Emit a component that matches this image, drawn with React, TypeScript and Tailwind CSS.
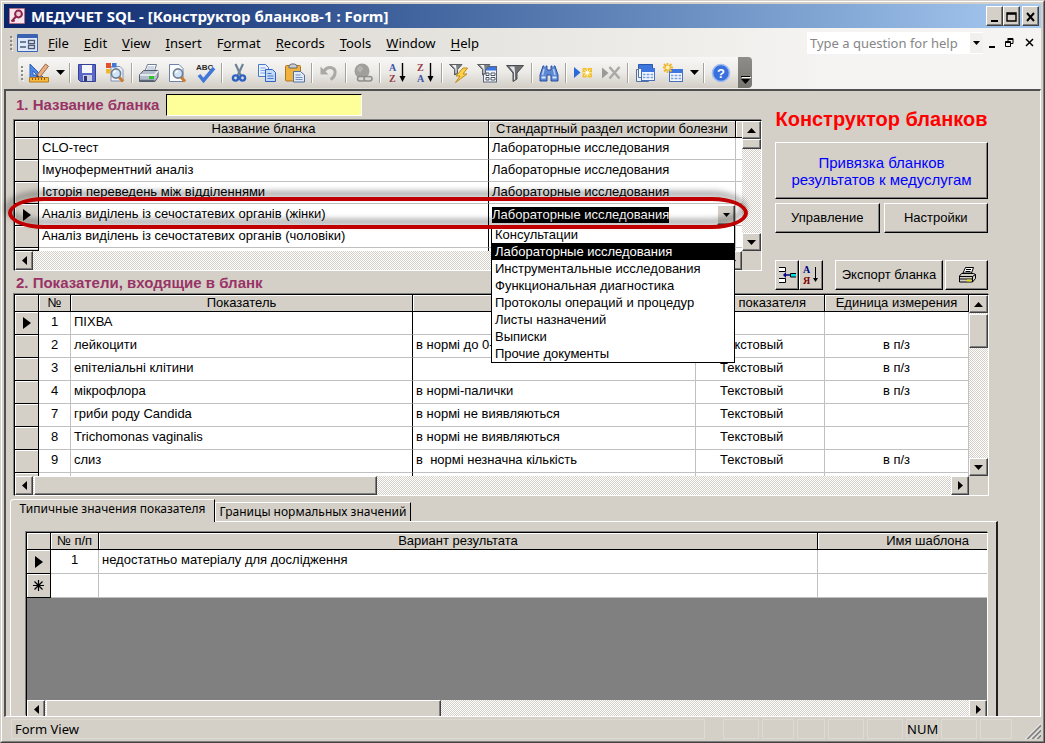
import { ReactNode, useState } from "react";
import { twMerge } from "tailwind-merge";

const raised =
  "bg-[#d4d0c8] border border-t-white border-l-white border-r-[#404040] border-b-[#404040] shadow-[inset_-1px_-1px_#808080]";
const dither =
  "bg-[repeating-conic-gradient(#ffffff_0_25%,#d4d0c8_0_50%)] bg-[length:2px_2px]";

const menus: [string, string, string][] = [
  ["", "F", "ile"],
  ["", "E", "dit"],
  ["", "V", "iew"],
  ["", "I", "nsert"],
  ["F", "o", "rmat"],
  ["", "R", "ecords"],
  ["", "T", "ools"],
  ["", "W", "indow"],
  ["", "H", "elp"],
];

const sections = [
  "Консультации",
  "Лабораторные исследования",
  "Инструментальные исследования",
  "Функциональная диагностика",
  "Протоколы операций и процедур",
  "Листы назначений",
  "Выписки",
  "Прочие документы",
];

const blanks = [
  { name: "CLO-тест", section: sections[1] },
  { name: "Імуноферментний аналіз", section: sections[1] },
  { name: "Історія переведень між відділеннями", section: sections[1] },
  { name: "Аналіз виділень із сечостатевих органів (жінки)", section: sections[1] },
  { name: "Аналіз виділень із сечостатевих органів (чоловіки)", section: "" },
];

const indicators = [
  { no: 1, name: "ПІХВА", norm: "", type: "", unit: "" },
  { no: 2, name: "лейкоцити", norm: "в нормі до 0-", type: "Текстовый", unit: "в п/з" },
  { no: 3, name: "епітеліальні клітини", norm: "", type: "Текстовый", unit: "в п/з" },
  { no: 4, name: "мікрофлора", norm: "в нормі-палички", type: "Текстовый", unit: "в п/з" },
  { no: 7, name: "гриби роду Candida", norm: "в нормі не виявляються", type: "Текстовый", unit: "" },
  { no: 8, name: "Trichomonas vaginalis", norm: "в нормі не виявляються", type: "Текстовый", unit: "" },
  { no: 9, name: "слиз", norm: "в\u00a0 нормі незначна кількість", type: "Текстовый", unit: "в п/з" },
];

export default function App() {
  return (
    <div className="min-h-screen flex flex-col border border-t-[#d4d0c8] border-l-[#d4d0c8] border-r-[#404040] border-b-[#404040] bg-[#d4d0c8] font-['Liberation_Sans',sans-serif] text-[13px] leading-4 text-black">
      <div className="flex-1 flex flex-col border border-t-white border-l-white border-r-[#808080] border-b-[#808080] p-[2px]">
        <TitleBar />
        <div className="bg-linear-to-r from-[#d4d0c8] to-[#f5f4f2] to-80%">
          <MenuBar />
          <Toolbar />
        </div>
        <main className="flex-1 flex flex-col border-t-2 border-l-2 border-r border-b border-t-[#505050] border-l-[#505050] border-r-white border-b-white pl-1">
          <div className="flex gap-[13px] pl-1 pr-[52px]">
            <BlankList />
            <Actions />
          </div>
          <IndicatorTable />
          <ValueTabs />
        </main>
        <StatusBar />
      </div>
    </div>
  );
}

const TitleBar = () => (
  <header className="flex h-6 items-center gap-1.5 bg-linear-to-r from-[#0a246a] to-[#a6caf0] pl-[5px] pr-[2px]">
    <svg className="size-4 shrink-0" viewBox="0 0 16 16">
      <rect width="16" height="16" rx="1" fill="#b8708a" />
      <rect x="1" y="1" width="14" height="14" fill="#f6e6ec" />
      <circle cx="9.5" cy="6" r="3.4" fill="#f3c9d6" stroke="#8d2348" strokeWidth="2" />
      <path d="M7 8.5 2.5 13.5M4 12l1.5 1.5" stroke="#8d2348" strokeWidth="2" />
    </svg>
    <h1 className="flex-1 font-['Noto_Sans',sans-serif] text-[15px] font-bold text-white whitespace-nowrap">
      МЕДУЧЕТ SQL - [Конструктор бланков-1 : Form]
    </h1>
    <div className="flex">
      <WindowButton label="Minimize">
        <path d="M4 12h7" strokeWidth="2" />
      </WindowButton>
      <WindowButton label="Maximize">
        <path d="M3 4h9v8H3zM3 5h9" />
      </WindowButton>
      <WindowButton label="Close" className="ml-[2px]">
        <path d="m4 4 7 8M11 4l-7 8" strokeWidth="2" />
      </WindowButton>
    </div>
  </header>
);

const WindowButton = ({
  label,
  className,
  children,
}: {
  label: string;
  className?: string;
  children: ReactNode;
}) => (
  <button
    aria-label={label}
    className={twMerge("h-5 w-[17px] flex items-center justify-center", raised, className)}
  >
    <svg className="size-[15px] shrink-0" viewBox="0 0 15 15" fill="none" stroke="black" strokeWidth="1.4">
      {children}
    </svg>
  </button>
);

const Grip = () => (
  <svg className="h-4 w-1 shrink-0" viewBox="0 0 4 16" fill="#8c8a85">
    <path d="M0 1h2v2H0zM0 5h2v2H0zM0 9h2v2H0zM0 13h2v2H0z" />
    <path d="M2 3h1v1H2zM2 7h1v1H2zM2 11h1v1H2zM2 15h1v1H2z" fill="white" />
  </svg>
);

const MenuBar = () => (
  <nav className="flex h-[29px] items-center pl-[6px] pr-1 font-['Noto_Sans',sans-serif] text-[13px]">
    <Grip />
    <svg className="ml-[3px] mr-[10px] h-[18px] w-[21px] shrink-0" viewBox="0 0 21 18">
      <rect width="21" height="18" rx="1" fill="#3c63b0" />
      <rect x="1" y="4" width="19" height="13" fill="#dfe9fa" />
      <path d="M3 8h6M3 13h6" stroke="#4b5b78" strokeWidth="1.5" />
      <path d="M11.5 6.5h6v3h-6zM11.5 11.500h6v3h-6z" fill="white" stroke="#4b5b78" strokeWidth="1.3" />
    </svg>
    <div className="flex gap-[15px]">
      {menus.map(([before, key, after]) => (
        <button key={before + key + after} className="whitespace-nowrap">
          {before}
          <u className="underline-offset-2">{key}</u>
          {after}
        </button>
      ))}
    </div>
    <div className="ml-auto flex h-[22px] items-center bg-white">
      <input
        aria-label="Type a question for help"
        placeholder="Type a question for help"
        className="w-[163px] px-[3px] placeholder:text-[#868686] outline-none"
      />
      <button aria-label="Show questions" className="flex h-5 w-[13px] items-center justify-center bg-[#f1f0ee]">
        <Arrow dir="down" className="w-[7px] h-1" />
      </button>
    </div>
    <svg className="ml-1 h-3 w-[50px] shrink-0" viewBox="0 0 50 12" fill="none" stroke="black">
      <path d="M2 10h6" strokeWidth="2" />
      <path d="M21 1.500h5v5h-2M21 2.500h5M21 1v3M18.500 4.500h5v5h-5zM18.500 5.500h5" />
      <path d="m39 2 7 7M46 2l-7 7" strokeWidth="1.500" />
    </svg>
  </nav>
);

const Arrow = ({
  dir,
  className,
}: {
  dir: "up" | "down" | "left" | "right";
  className?: string;
}) => {
  const paths = {
    up: "M5 0l5 10H0z",
    down: "M0 0h10L5 10z",
    left: "M10 0v10L0 5z",
    right: "M0 0l10 5L0 10z",
  };
  return (
    <svg className={className} viewBox="0 0 10 10" preserveAspectRatio="none">
      <path d={paths[dir]} />
    </svg>
  );
};

const Tool = ({
  label,
  children,
}: {
  label: string;
  children: ReactNode;
}) => (
  <button aria-label={label} className="flex h-7 w-7 items-center justify-center">
    <svg className="size-5 overflow-visible" viewBox="0 0 20 20" fill="none">
      {children}
    </svg>
  </button>
);

const Separator = () => (
  <div className="flex h-5 w-[6px] justify-center">
    <div className="h-full w-px bg-[#a5a39d]" />
    <div className="h-full w-px bg-white" />
  </div>
);

const DropArrow = () => (
  <button aria-label="More" className="flex h-7 w-3.5 items-center justify-center">
    <Arrow dir="down" className="h-[5px] w-[9px]" />
  </button>
);

const Lens = () => (
  <>
    <path d="m14 14 4 4.500" stroke="#d07a2a" strokeWidth="3" />
    <circle cx="11" cy="10.500" r="4.600" fill="#cfe4f8" stroke="#6f7f90" strokeWidth="1.600" />
    <path d="M8.500 10a3 3 0 0 1 2.500-2" stroke="white" strokeWidth="1.400" />
  </>
);

const Sheet = () => (
  <path d="M2.500 1.500h9.500l4 4v13H2.500z" fill="#fbfcfe" stroke="#6c84ac" />
);

const Grid = ({ x, y }: { x: number; y: number }) => (
  <g transform={`translate(${x} ${y})`}>
    <rect x="0.500" y="0.500" width="13" height="12" fill="#eef4fd" stroke="#4a6fb8" />
    <path d="M0 0h14v4H0z" fill="#3d76de" />
    <path d="M2 6.500h10M2 9.500h10" stroke="#7fa2de" strokeWidth="1.500" />
    <path d="M5 4v8M9 4v8" stroke="white" />
  </g>
);

const SmallFunnel = () => (
  <>
    <path d="M0.500 1.500h12.500l-4.500 5v4l-3 1.500v-5.500z" fill="#808386" stroke="#5d6063" />
    <path d="M3 2h4l.5 4v4h-1v-4z" fill="#f0f1f2" />
  </>
);

const SortIcon = ({ first, second }: { first: string; second: string }) => (
  <g fontFamily="Liberation Serif" fontWeight="bold" fontSize="10">
    <text x="2" y="8" fill={first === "A" ? "#3a56a8" : "#963c44"}>{first}</text>
    <text x="2" y="19" fill={second === "A" ? "#3a56a8" : "#963c44"}>{second}</text>
    <path d="M15.500 0v15" stroke="black" strokeWidth="1.400" />
    <path d="M12.500 13h6l-3 6z" fill="black" />
  </g>
);

const Toolbar = () => (
  <div className="flex h-8 items-stretch pl-[14px] pb-px">
    <div className="flex items-center rounded-l bg-linear-to-b from-[#f8f7f6] via-[#eceae6] to-[#d2cec6] pl-[3px] pr-[3px]">
      <Grip />
      <Tool label="Design view">
        <path d="M1 1v14h14z" fill="#4f86e4" stroke="#2f62c0" />
        <path d="M4 8v4h4z" fill="#f2f4f8" stroke="#2f62c0" />
        <path d="m8 12 8.500-11 3 2.300-8.700 11z" fill="#e8b184" stroke="#9b6a48" />
        <path d="m7 15.500 1-3.500 2.800 2.300z" fill="#4b3b30" />
        <path d="M.500 14.500h19v4.500H.500z" fill="#f5b83a" stroke="#b97a1d" />
        <path d="M3.500 15v2M6.500 15v2M9.500 15v2M12.500 15v2M15.500 15v2" stroke="#8a5a12" />
      </Tool>
      <DropArrow />
      <Separator />
      <Tool label="Save">
        <path d="M1.500 1.500h17v17h-15l-2-2z" fill="#5b67c6" stroke="#343f96" />
        <path d="M5 2h10v8H5z" fill="#f4f6fb" />
        <path d="M6 12h9v6H6z" fill="#c9cfe0" />
        <path d="M7 13h3v5H7z" fill="#2c3578" />
      </Tool>
      <Tool label="File search">
        <path d="M6 3.500h9l3 3V18H6z" fill="#eef3fa" stroke="#7e93b5" />
        <path d="M1 0h5v5H1z" fill="#e2512a" />
        <path d="M7 0h4.500v4.500H7z" fill="#3f78d8" />
        <path d="M1 6h4.500v4.500H1z" fill="#f2b52c" />
        <Lens />
      </Tool>
      <Separator />
      <Tool label="Print">
        <path d="M6 8 8.500 1.500h9L15.500 8z" fill="white" stroke="#6f7f97" />
        <path d="M8.500 4h7M8 6h7" stroke="#9fb0c8" />
        <path d="m.500 12 4-4.500h14.500v6.500l-3 4.500H.500z" fill="#b4bdcb" stroke="#4f5a6a" />
        <path d="M1 12h14.500L19 8" stroke="#f4f6f9" strokeWidth="1.500" />
        <path d="M10 13h5v3h-5z" fill="#2fc42f" />
        <path d="M1 17.500h14.500" stroke="#5c6777" strokeWidth="1.500" />
      </Tool>
      <Tool label="Print preview">
        <Sheet />
        <Lens />
      </Tool>
      <Tool label="Spelling">
        <text x="1" y="7" fontSize="8" fontWeight="bold" fontFamily="Liberation Sans" fill="#2a2a2a">ABC</text>
        <path d="m4 12 4.500 5.500L19 5" stroke="#3f77d8" strokeWidth="3.500" />
      </Tool>
      <Separator />
      <Tool label="Cut">
        <path d="M6.500 1 12 13M14 1 8.500 13" stroke="#6f8398" strokeWidth="2.200" />
        <circle cx="6.500" cy="15" r="2.600" stroke="#2f62c0" strokeWidth="2.400" />
        <circle cx="13.500" cy="15" r="2.600" stroke="#2f62c0" strokeWidth="2.400" />
      </Tool>
      <Tool label="Copy">
        <path d="M1.500 1.500h7l3 3v9h-10z" fill="#e8f0fc" stroke="#4a78cc" />
        <path d="M3.500 5h5M3.500 7.500h6M3.500 10h6" stroke="#7da1e0" />
        <path d="M8.500 6.500h7l3 3v9h-10z" fill="#c4d9f8" stroke="#2f62c0" />
        <path d="M10.500 10.500h4M10.500 13h6M10.500 15.500h6" stroke="#4a78cc" />
      </Tool>
      <Tool label="Paste">
        <rect x="0.500" y="2.500" width="15" height="15.500" rx="1" fill="#f0b23c" stroke="#b0751c" />
        <path d="M4 5V2.500L6.500 1h3L12 2.500V5z" fill="#c9cdd4" stroke="#656a73" />
        <path d="M8.500 8.500h7l4 3.500v7h-11z" fill="#dfe9f8" stroke="#54719f" />
        <path d="M10.500 12h5M10.500 14.500h7M10.500 16.500h7" stroke="#7390bf" />
      </Tool>
      <Separator />
      <Tool label="Undo">
        <path d="M5 8c4-5.500 12-4 11 2.500-.500 3-2.500 5-4.500 6" stroke="#aaa9a6" strokeWidth="3" />
        <path d="M1.500 3.500v8h8z" fill="#aaa9a6" />
      </Tool>
      <Separator />
      <Tool label="Insert hyperlink">
        <circle cx="9" cy="8" r="7.500" fill="#a09f9c" />
        <path d="M5 4c2-2 4-1 5 1s-2 2-2 4-3-1-4-2z" fill="#b4b3b0" />
        <rect x="4.500" y="13.500" width="8" height="4.500" rx="2.200" fill="#d8d7d4" stroke="#8f8e8b" strokeWidth="1.500" />
        <rect x="11" y="13.500" width="8" height="4.500" rx="2.200" fill="#d8d7d4" stroke="#8f8e8b" strokeWidth="1.500" />
      </Tool>
      <Separator />
      <Tool label="Sort ascending">
        <SortIcon first="A" second="Z" />
      </Tool>
      <Tool label="Sort descending">
        <SortIcon first="Z" second="A" />
      </Tool>
      <Separator />
      <Tool label="Filter by selection">
        <SmallFunnel />
        <path d="m14 5-7 8h4l-4.500 6.500L18 11h-4l4.500-6z" fill="#fbd24a" stroke="#c08a1c" />
      </Tool>
      <Tool label="Filter by form">
        <rect x="6.500" y="3.500" width="13" height="15.500" fill="#f2f6fc" stroke="#56657d" />
        <path d="M7 4h12v3.500H7z" fill="#3d76de" />
        <path d="M9 10h3v2.500H9zM9 14.500h3V17H9zM14 10h4v2.500h-4zM14 14.500h4V17h-4z" fill="white" stroke="#4c5665" />
        <SmallFunnel />
      </Tool>
      <Tool label="Apply filter">
        <path d="M1.500 2.500h17l-6.500 7.500v6l-4 2.500V10z" fill="#6e7073" stroke="#4a4c50" />
        <path d="M4.500 3.500h5l.5 6v7l-1 .500V9.500z" fill="#e4e6e8" />
      </Tool>
      <Separator />
      <Tool label="Find">
        <path d="M4 3h4v4h4V3h4l3 9v6h-7v-6H8v6H1v-6z" fill="#5c88d4" stroke="#284f9c" />
        <path d="M5 2.500h2M13 2.500h2M2.500 14.500h4M13.500 14.500h4" stroke="#dbe7fb" strokeWidth="2" />
        <path d="M5 6 3.500 12M14.500 6l1.500 6" stroke="#b7cef5" strokeWidth="1.500" />
      </Tool>
      <Separator />
      <Tool label="New record">
        <path d="M1 4 7.500 9.500 1 15z" fill="#2c6ad6" />
        <path d="M9.500 5h9.500v9.500H9.500z" fill="#f0bf35" />
        <path d="M14.200 5v9.500M9.500 9.800H19M11 6.500l6.500 6.500M17.500 6.500 11 13" stroke="#fff3b4" />
        <circle cx="14.200" cy="9.800" r="1.800" fill="white" />
      </Tool>
      <Tool label="Delete record">
        <path d="M1 4.500 7.500 10 1 15.500z" fill="#9b9a97" />
        <path d="m8.500 4 10 11.500M18.500 4l-10 11.500" stroke="#aaa9a6" strokeWidth="2.500" />
      </Tool>
      <Separator />
      <Tool label="Database window">
        <path d="M1.500 6.500h12v12h-12z" fill="#e8effa" stroke="#54719f" />
        <path d="M3.500 1.500h14v4h-14z" fill="#3d76de" stroke="#2b57ab" />
        <path d="M3.500 5.500h3v9h-3z" fill="#f7f9fd" stroke="#54719f" />
        <Grid x={6} y={5} />
      </Tool>
      <Tool label="New object">
        <Grid x={6} y={6} />
        <path d="M4.500 0v10M0 4.500h10M1 1l7.500 7.500M8.500 1 1 8.500" stroke="#eeb62d" strokeWidth="1.800" />
        <circle cx="4.700" cy="4.600" r="2" fill="#fff4b8" />
      </Tool>
      <DropArrow />
      <Separator />
      <Tool label="Help">
        <circle cx="10" cy="10" r="8.500" fill="#3a70dc" stroke="#9fbdf0" strokeWidth="1.600" />
        <text x="10" y="14.500" fontSize="13" fontWeight="bold" textAnchor="middle" fontFamily="Liberation Sans" fill="white">?</text>
      </Tool>
    </div>
    <button
      aria-label="Toolbar options"
      className="flex w-[14px] flex-col items-center justify-end gap-[2px] rounded-r bg-linear-to-b from-[#8f8d89] to-[#77756f] pb-1"
    >
      <span className="h-px w-[9px] bg-black shadow-[1px_1px_white]" />
      <Arrow dir="down" className="h-[5px] w-[9px]" />
    </button>
  </div>
);

const ScrollButton = ({ dir }: { dir: "up" | "down" | "left" | "right" }) => {
  const vertical = dir === "up" || dir === "down";
  return (
    <button
      aria-label={"Scroll " + dir}
      className={twMerge(
        "flex shrink-0 items-center justify-center",
        vertical ? "h-[18px] w-full" : "h-full w-[18px]",
        raised
      )}
    >
      <Arrow dir={dir} className={vertical ? "h-[5px] w-[9px]" : "h-[9px] w-[5px]"} />
    </button>
  );
};

const VScroll = ({ thumb }: { thumb: string }) => (
  <div className={twMerge("flex w-[19px] shrink-0 flex-col", dither)}>
    <ScrollButton dir="up" />
    <div className={twMerge(raised, thumb)} />
    <div className="flex-1" />
    <ScrollButton dir="down" />
  </div>
);

const HScroll = ({ thumb }: { thumb?: string }) => (
  <div className={twMerge("flex h-[19px] min-w-0 flex-1", dither)}>
    <ScrollButton dir="left" />
    {thumb && <div className={twMerge(raised, "ml-px", thumb)} />}
    <div className="flex-1" />
    <ScrollButton dir="right" />
  </div>
);

const frame =
  "border border-t-black border-l-black border-r-white border-b-white shadow-[-1px_-1px_#808080]";

const HeadCell = ({ className, children }: { className?: string; children?: ReactNode }) => (
  <th
    className={twMerge(
      "h-[17px] overflow-hidden whitespace-nowrap border-b border-r border-black bg-[#d4d0c8] p-0 text-center font-normal leading-4 shadow-[inset_1px_1px_white]",
      className
    )}
  >
    {children}
  </th>
);

const Selector = ({ children }: { children?: ReactNode }) => (
  <td className="border-b border-r border-black bg-[#d4d0c8] p-0 shadow-[inset_1px_1px_white]">
    <div className="flex justify-center">{children}</div>
  </td>
);

const Cell = ({ className, children }: { className?: string; children?: ReactNode }) => (
  <td
    className={twMerge(
      "overflow-hidden whitespace-nowrap border-b border-r border-[#c0c0c0] bg-white p-0 pl-[3px] align-top leading-5",
      className
    )}
  >
    {children}
  </td>
);

const Current = () => <Arrow dir="right" className="h-3 w-2" />;

const SectionPicker = () => {
  const [section, setSection] = useState(sections[1]);
  return (
    <div className="relative flex h-[21px] items-center justify-between">
      <select
        aria-label="Стандартный раздел истории болезни"
        value={section}
        onChange={(e) => setSection(e.target.value)}
        className="field-sizing-content h-4 appearance-none bg-black leading-4 text-white outline-none"
      >
        {sections.map((s) => (
          <option key={s}>{s}</option>
        ))}
      </select>
      <button aria-label="Open list" className={twMerge("flex h-5 w-[18px] items-center justify-center", raised)}>
        <Arrow dir="down" className="h-1 w-[7px]" />
      </button>
      <ul
        role="listbox"
        className="absolute -left-px right-0 top-full z-10 border border-black bg-white"
      >
        {sections.map((s) => (
          <li
            key={s}
            role="option"
            aria-selected={s === section}
            onClick={() => setSection(s)}
            className={twMerge("h-[17px] pl-[3px] leading-[17px]", s === section && "bg-black text-white")}
          >
            {s}
          </li>
        ))}
      </ul>
    </div>
  );
};

const BlankList = () => (
  <section className="min-w-0 flex-1">
    <div className="flex items-center gap-[7px] pl-[2px] pt-[3px]">
      <label htmlFor="blank-name" className="text-[15px] font-bold text-[#993366]">
        1. Название бланка
      </label>
      <input
        id="blank-name"
        className="h-[22px] w-[196px] border border-t-black border-l-black border-r-white border-b-white bg-[#ffff99] px-1 outline-none"
      />
    </div>
    <div className={twMerge("relative mt-1", frame)}>
      <div className="flex">
        <div className="h-[130px] min-w-0 flex-1">
          <table className="h-full w-full table-fixed border-separate border-spacing-0">
            <colgroup>
              <col className="w-6" />
              <col />
              <col className="w-[247px]" />
              <col className="w-[6px]" />
            </colgroup>
            <thead>
              <tr>
                <HeadCell />
                <HeadCell>Название бланка</HeadCell>
                <HeadCell>Стандартный раздел истории болезни</HeadCell>
                <HeadCell className="border-r-0" />
              </tr>
            </thead>
            <tbody>
              {blanks.map((blank, index) => (
                <tr key={blank.name} className="h-[22px]">
                  <Selector>{index === 3 && <Current />}</Selector>
                  <Cell className="border-r-black">{blank.name}</Cell>
                  <Cell className={index === 3 ? "overflow-visible" : ""}>
                    {index === 3 ? <SectionPicker /> : blank.section}
                  </Cell>
                  <Cell className="border-r-0" />
                </tr>
              ))}
              <tr>
                <Selector />
                <Cell className="border-b-0 border-r-black" />
                <Cell className="border-b-0" />
                <Cell className="border-0" />
              </tr>
            </tbody>
          </table>
        </div>
        <VScroll thumb="h-[10px]" />
      </div>
      <div className="flex pr-[19px]">
        <HScroll />
      </div>
      {/* marker drawn round the current record */}
      <div className="pointer-events-none absolute -left-[7px] right-[13px] top-[76px] z-20 h-8 rounded-[36px/16px] border-4 border-[#c00000] drop-shadow-[-2px_-5px_3px_rgba(0,0,0,0.5)]" />
    </div>
    <h2 className="h-[23px] pl-[2px] pt-1 text-[15px] font-bold text-[#993366]">
      2. Показатели, входящие в бланк
    </h2>
  </section>
);

const FormButton = ({
  label,
  className,
  children,
}: {
  label?: string;
  className?: string;
  children: ReactNode;
}) => (
  <button
    aria-label={label}
    className={twMerge(
      "flex h-[30px] items-center justify-center whitespace-nowrap",
      raised,
      "border-r-black border-b-black",
      className
    )}
  >
    {children}
  </button>
);

const Actions = () => (
  <aside className="flex w-[213px] flex-col pb-1 pt-4">
    <h2 className="text-center text-xl leading-6 font-bold text-[#ff0000] whitespace-nowrap">
      Конструктор бланков
    </h2>
    <FormButton className="mt-[11px] h-[57px] text-[15px] leading-[17px] text-[#0000ff]">
      Привязка бланков
      <br />
      результатов к медуслугам
    </FormButton>
    <div className="mt-1 flex gap-1">
      <FormButton className="flex-1">Управление</FormButton>
      <FormButton className="flex-1">Настройки</FormButton>
    </div>
    <div className="mt-auto flex">
      <FormButton label="Вставить" className="w-6">
        <svg className="h-5 w-[18px]" viewBox="0 0 18 20" fill="none" stroke="black">
          <path d="M1 2.500h6.500v4H1M1 13.500h6.500v4H1" fill="white" />
          <path d="M6 10h6" stroke="#000080" strokeWidth="1.500" />
          <path d="M5 10l3-3v6z" fill="#000080" stroke="none" />
          <path d="M18 8.500h-5.500v3.500H18" fill="#00e0e0" />
        </svg>
      </FormButton>
      <FormButton label="Сортировка" className="w-6">
        <svg className="h-5 w-[18px]" viewBox="0 0 18 20" fontFamily="Liberation Serif" fontWeight="bold" fontSize="10">
          <text x="1" y="8" fill="#000080">А</text>
          <text x="1" y="19" fill="#800000">Я</text>
          <path d="M13.500 2v14" stroke="black" />
          <path d="M11 13h5l-2.500 4z" />
        </svg>
      </FormButton>
      <FormButton className="ml-3 flex-1">Экспорт бланка</FormButton>
      <FormButton label="Печать" className="ml-[2px] w-[43px]">
        <svg className="size-[18px]" viewBox="0 0 18 18" fill="none" stroke="black">
          <path d="M5 7 7.500 1.500h8L13.500 7z" fill="white" />
          <path d="M8 3.500h5M7.500 5.500h5" />
          <path d="M3.500 7.500h12l2 1v4l-3 3.500h-13v-6z" fill="#d4d0c8" />
          <path d="M1.500 10.500h13l3-2M1.500 13h13M14.500 10.500V16" />
          <path d="M9 14.500h4" stroke="#e8e000" strokeWidth="2" />
        </svg>
      </FormButton>
    </div>
  </aside>
);

const IndicatorTable = () => (
  <section className={twMerge("ml-1 mr-[51px]", frame)}>
    <div className="flex">
      <div className="h-[181px] min-w-0 flex-1 overflow-hidden">
        <table className="w-full table-fixed border-separate border-spacing-0">
          <colgroup>
            <col className="w-6" />
            <col className="w-8" />
            <col />
            <col className="w-[283px]" />
            <col className="w-[129px]" />
            <col className="w-[144px]" />
          </colgroup>
          <thead>
            <tr>
              <HeadCell />
              <HeadCell>№</HeadCell>
              <HeadCell>Показатель</HeadCell>
              <HeadCell />
              <HeadCell className="pr-[18px] text-right">показателя</HeadCell>
              <HeadCell>Единица измерения</HeadCell>
            </tr>
          </thead>
          <tbody>
            {indicators.map((row, index) => (
              <tr key={row.no} className="h-[23px]">
                <Selector>{index === 0 && <Current />}</Selector>
                <Cell className="pl-0 text-center">{row.no}</Cell>
                <Cell className="border-r-black">{row.name}</Cell>
                <Cell>{row.norm}</Cell>
                <Cell className="pl-6">{row.type}</Cell>
                <Cell className="pl-0 text-center">{row.unit}</Cell>
              </tr>
            ))}
            <tr className="h-[23px]">
              <Selector />
              <Cell />
              <Cell className="border-r-black" />
              <Cell />
              <Cell />
              <Cell />
            </tr>
          </tbody>
        </table>
      </div>
      <VScroll thumb="h-[34px] mt-px" />
    </div>
    <div className="flex pr-[19px]">
      <HScroll thumb="w-[343px]" />
    </div>
  </section>
);

const ValueTabs = () => (
  <section className="mt-[3px] flex flex-1 flex-col pr-[42px]">
    <div role="tablist" className="flex items-end font-['Noto_Sans',sans-serif] text-xs leading-4">
      <button
        role="tab"
        aria-selected="true"
        className="relative -mb-px h-[23px] w-[205px] whitespace-nowrap rounded-tl border border-t-white border-l-white border-r-black border-b-0 bg-[#d4d0c8] pb-1"
      >
        Типичные значения показателя
      </button>
      <button
        role="tab"
        aria-selected="false"
        className="h-[19px] w-[196px] whitespace-nowrap border border-t-white border-l-white border-r-black border-b-0 bg-[#d4d0c8]"
      >
        Границы нормальных значений
      </button>
    </div>
    <div className="flex flex-1 flex-col border-t border-l border-r-2 border-t-white border-l-white border-r-[#202020] pl-[15px] pr-2 pt-[10px]">
      <div className={twMerge("flex flex-1 flex-col bg-[#808080]", frame, "border-b-0")}>
        <table className="w-full table-fixed border-separate border-spacing-0">
          <colgroup>
            <col className="w-6" />
            <col className="w-12" />
            <col />
            <col className="w-[169px]" />
          </colgroup>
          <thead>
            <tr>
              <HeadCell />
              <HeadCell>№ п/п</HeadCell>
              <HeadCell>Вариант результата</HeadCell>
              <HeadCell className="border-r-0 pr-[18px] text-right">Имя шаблона</HeadCell>
            </tr>
          </thead>
          <tbody>
            <tr className="h-6">
              <Selector>
                <Current />
              </Selector>
              <Cell className="pl-0 text-center">1</Cell>
              <Cell>недостатньо матеріалу для дослідження</Cell>
              <Cell className="border-r-0" />
            </tr>
            <tr className="h-6">
              <Selector>
                <svg className="size-[11px]" viewBox="0 0 11 11" stroke="black" strokeWidth="1.200">
                  <path d="M5.500 0v11M0 5.500h11M1.500 1.500l8 8M9.500 1.500l-8 8" />
                </svg>
              </Selector>
              <Cell />
              <Cell />
              <Cell className="border-r-0" />
            </tr>
          </tbody>
        </table>
        <div className="mt-auto flex h-4 overflow-hidden">
          <HScroll thumb="w-[395px]" />
        </div>
      </div>
    </div>
  </section>
);

const panels = ["w-9", "w-8", "w-7", "w-9", "w-9", "w-8", "w-9", "w-8"];

const StatusBar = () => (
  <footer className="flex h-[22px] items-center gap-[3px] pl-[7px] pt-[2px] font-['Noto_Sans',sans-serif]">
    <div className="h-5 flex-1 border border-[#dedbd5] pl-[3px] leading-[18px]">Form View</div>
    <div className="w-3" />
    {panels.map((width, index) => (
      <div
        key={index}
        className={twMerge("h-5 border border-[#dedbd5] text-center leading-[18px]", width)}
      >
        {index === 5 && "NUM"}
      </div>
    ))}
    <svg className="ml-[10px] size-4 shrink-0 self-end" viewBox="0 0 16 16" stroke="#808080" strokeWidth="2">
      <path d="M2 16 16 2M7 16l9-9M12 16l4-4" />
      <path d="M.5 16 16 .5M5.500 16 16 5.500M10.500 16 16 10.500" stroke="white" strokeWidth="1" />
    </svg>
  </footer>
);
